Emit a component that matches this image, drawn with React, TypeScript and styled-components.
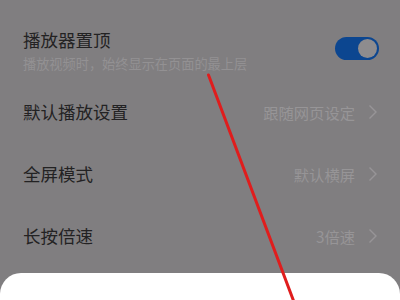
import React from 'react'
import styled, { createGlobalStyle } from 'styled-components'

const GlobalStyle = createGlobalStyle`
  html, body {
    margin: 0;
    padding: 0;
    background: #807e80;
    overflow: hidden;
  }
  body {
    font-family: "Noto Sans CJK SC", "Noto Sans", sans-serif;
  }
`

interface RowProps {
  title: string,
  value: string,
}

const Chevron = () => (
  <ChevronIcon viewBox="0 0 10 16">
    <polyline points="1.5,1.5 8,8 1.5,14.5" />
  </ChevronIcon>
)

const SettingRow: React.FC<RowProps> = ({ title, value }) => (
  <Row>
    <Title>{title}</Title>
    <RowRight>
      <Value>{value}</Value>
      <Chevron />
    </RowRight>
  </Row>
)

const App = () => {
  return (
    <Page>
      <GlobalStyle />
      <List>
        <HeaderRow>
          <HeaderText>
            <Title>播放器置顶</Title>
            <Subtitle>播放视频时，始终显示在页面的最上层</Subtitle>
          </HeaderText>
          <Toggle>
            <Knob />
          </Toggle>
        </HeaderRow>
        <SettingRow title="默认播放设置" value="跟随网页设定" />
        <SettingRow title="全屏模式" value="默认横屏" />
        <SettingRow title="长按倍速" value="3倍速" />
      </List>
      <Sheet />
      <Annotation viewBox="0 0 400 300">
        <line x1="208.5" y1="75" x2="294" y2="302" />
      </Annotation>
    </Page>
  )
}

const Page = styled.div`
  position: relative;
  width: 400px;
  height: 300px;
  overflow: hidden;
  background: #807e80;
  display: flex;
  flex-direction: column;
`

const List = styled.div`
  display: flex;
  flex-direction: column;
  padding: 0 23px;
`

const HeaderRow = styled.div`
  display: flex;
  justify-content: space-between;
  align-items: flex-start;
  height: 81px;
  padding-top: 30px;
  box-sizing: border-box;
`

const HeaderText = styled.div`
  display: flex;
  flex-direction: column;
  gap: 6px;
`

const Title = styled.div`
  font-size: 17.5px;
  line-height: 20px;
  color: #232223;
`

const Subtitle = styled.div`
  font-size: 13.2px;
  line-height: 16px;
  color: #939193;
`

const Toggle = styled.div`
  width: 44px;
  height: 23px;
  margin-top: 7px;
  margin-right: -2px;
  border-radius: 12px;
  background: #0c4690;
  display: flex;
  align-items: center;
  justify-content: flex-end;
  padding: 0 2px;
  box-sizing: border-box;
`

const Knob = styled.div`
  width: 19px;
  height: 19px;
  border-radius: 50%;
  background: #8e8c8e;
`

const Row = styled.div`
  display: flex;
  justify-content: space-between;
  align-items: center;
  height: 62px;
`

const RowRight = styled.div`
  display: flex;
  align-items: center;
  gap: 13px;
  margin-right: -1px;
`

const Value = styled.div`
  font-size: 15.3px;
  line-height: 20px;
  color: #979597;
`

const ChevronIcon = styled.svg`
  width: 10px;
  height: 16px;
  fill: none;
  stroke: #979597;
  stroke-width: 1.4;
`

const Sheet = styled.div`
  margin-top: 6px;
  flex: 1;
  background: #ffffff;
  border-radius: 21px 21px 0 0;
`

const Annotation = styled.svg`
  position: absolute;
  left: 0;
  top: 0;
  width: 400px;
  height: 300px;
  pointer-events: none;
  line {
    stroke: #e01d1d;
    stroke-width: 3;
    stroke-linecap: round;
  }
`

export default App
